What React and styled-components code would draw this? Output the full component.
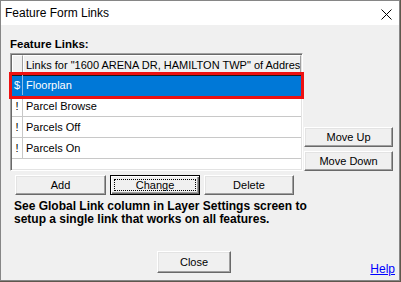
import React from 'react'
import styled, { createGlobalStyle } from 'styled-components'

const GlobalStyle = createGlobalStyle`
  html, body {
    margin: 0;
    padding: 0;
    background: #5e574d;
  }
  body {
    font-family: "Liberation Sans", Arial, sans-serif;
    font-size: 11px;
    color: #000;
  }
  * { box-sizing: border-box; }
`

const links = [
  { flag: '$', name: 'Floorplan', selected: true },
  { flag: '!', name: 'Parcel Browse' },
  { flag: '!', name: 'Parcels Off' },
  { flag: '!', name: 'Parcels On' },
]

const App = () => {
  return (
    <>
      <GlobalStyle />
      <Window>
        <TitleBar>
          <Title>Feature Form Links</Title>
          <CloseX width="11" height="11" viewBox="0 0 11 11">
            <path d="M0.5 0.5 L10.5 10.5 M10.5 0.5 L0.5 10.5" stroke="#000" strokeWidth="1" />
          </CloseX>
        </TitleBar>

        <Body>
          <Label>Feature Links:</Label>

          <MainRow>
            <Grid>
              <HeaderRow>
                <HeaderCell $narrow />
                <HeaderCell>Links for "1600 ARENA DR, HAMILTON TWP" of Address</HeaderCell>
              </HeaderRow>
              {links.map((l) => (
                <Row key={l.name} $selected={l.selected}>
                  <FlagCell $selected={l.selected}>{l.flag}</FlagCell>
                  <NameCell>{l.name}</NameCell>
                </Row>
              ))}
            </Grid>

            <SideButtons>
              <Button $w={89}>Move Up</Button>
              <Button $w={89}>Move Down</Button>
            </SideButtons>
          </MainRow>

          <ButtonRow>
            <Button $w={91}>Add</Button>
            <Button $w={90} $default>
              <Focus>Change</Focus>
            </Button>
            <Button $w={90}>Delete</Button>
          </ButtonRow>

          <Note>
            See Global Link column in Layer Settings screen to<br />
            setup a single link that works on all features.
          </Note>

          <Footer>
            <Button $w={74} $h={22} $ml={147}>Close</Button>
            <HelpLink href="#">Help</HelpLink>
          </Footer>
        </Body>
      </Window>
    </>
  )
}

export default App

const Window = styled.div`
  width: 400px;
  height: 281px;
  border: 1px solid #868686;
  background: #f0f0f0;
  display: flex;
  flex-direction: column;
`

const TitleBar = styled.div`
  height: 24px;
  background: #fff;
  display: flex;
  align-items: center;
  padding: 0 7px 0 4px;
`

const Title = styled.div`
  font-family: "Liberation Sans", Arial, sans-serif;
  font-size: 12px;
  color: #000;
  margin-top: -1px;
`

const CloseX = styled.svg`
  margin-left: auto;
  margin-top: 3px;
`

const Body = styled.div`
  flex: 1;
  display: flex;
  flex-direction: column;
  padding: 13px 4px 7px 9px;
`

const Label = styled.div`
  font-weight: bold;
  font-size: 11.5px;
  line-height: 13px;
  margin-bottom: 2px;
`

const MainRow = styled.div`
  display: flex;
  align-items: flex-end;
`

const Grid = styled.div`
  width: 293px;
  height: 118px;
  background: #fff;
  border-top: 1px solid #a0a0a0;
  border-left: 1px solid #a0a0a0;
  border-right: 1px solid #fff;
  border-bottom: 1px solid #fff;
  box-shadow: inset 1px 1px 0 #696969, inset -1px -1px 0 #e3e3e3;
  padding: 1px;
  display: flex;
  flex-direction: column;
`

const HeaderRow = styled.div`
  display: flex;
  height: 20px;
  background: #f0f0f0;
`

const HeaderCell = styled.div`
  ${(p) => (p.$narrow ? 'width: 11px; flex: none;' : 'flex: 1;')}
  border-top: 1px solid #fff;
  border-left: 1px solid #fff;
  border-right: 1px solid #a0a0a0;
  border-bottom: 1px solid #a0a0a0;
  padding-left: 2px;
  line-height: 18px;
  white-space: nowrap;
  overflow: hidden;
`

const Row = styled.div`
  display: flex;
  height: 21px;
  border-bottom: 1px solid ${(p) => (p.$selected ? '#0078d7' : '#c8c8c8')};
  background: ${(p) => (p.$selected ? '#0078d7' : '#fff')};
  color: ${(p) => (p.$selected ? '#fff' : '#000')};
  box-shadow: ${(p) => (p.$selected ? 'inset 0 1px 0 #1b1b1b' : 'none')};
  outline: ${(p) => (p.$selected ? '3px solid #ee1111' : 'none')};
  position: relative;
  z-index: ${(p) => (p.$selected ? 1 : 0)};
`

const FlagCell = styled.div`
  width: 11px;
  flex: none;
  text-align: center;
  line-height: 20px;
  border-right: 1px solid ${(p) => (p.$selected ? '#8fbfe8' : '#c8c8c8')};
`

const NameCell = styled.div`
  flex: 1;
  padding-left: 3px;
  line-height: 20px;
  white-space: nowrap;
`

const SideButtons = styled.div`
  display: flex;
  flex-direction: column;
  gap: 4px;
  margin-left: 1px;
`

const Button = styled.button`
  width: ${(p) => p.$w}px;
  height: ${(p) => p.$h || 20}px;
  margin-left: ${(p) => p.$ml || 0}px;
  font-family: "Liberation Sans", Arial, sans-serif;
  font-size: 11px;
  color: #000;
  background: #f0f0f0;
  padding: 0;
  border: 1px solid;
  border-color: ${(p) => (p.$default ? '#000' : '#fff #696969 #696969 #fff')};
  box-shadow: ${(p) =>
    p.$default
      ? 'inset 1px 1px 0 #fff, inset -1px -1px 0 #696969, inset -2px -2px 0 #a0a0a0'
      : 'inset -1px -1px 0 #a0a0a0, inset 1px 1px 0 #e3e3e3'};
  display: flex;
  align-items: center;
  justify-content: center;
`

const Focus = styled.span`
  display: flex;
  align-items: center;
  justify-content: center;
  width: calc(100% - 6px);
  height: calc(100% - 6px);
  border: 1px dotted #000;
`

const ButtonRow = styled.div`
  display: flex;
  gap: 4px;
  margin-top: 4px;
  padding-left: 5px;
`

const Note = styled.div`
  font-weight: bold;
  font-size: 12px;
  line-height: 13px;
  margin-top: 5px;
  padding-left: 4px;
`

const Footer = styled.div`
  margin-top: auto;
  display: flex;
  align-items: flex-end;
`

const HelpLink = styled.a`
  margin-left: auto;
  margin-bottom: -3px;
  color: #0000ff;
  text-decoration: underline;
  font-size: 12px;
  line-height: 14px;
`
